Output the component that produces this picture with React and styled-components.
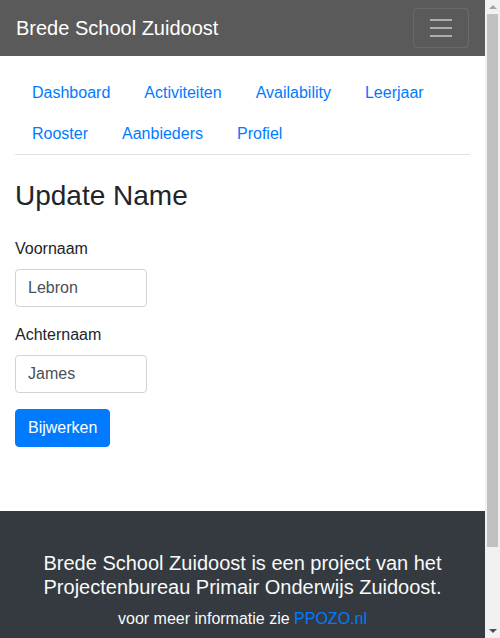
import React from 'react';
import styled, { createGlobalStyle } from 'styled-components';

const GlobalStyle = createGlobalStyle`
  * { box-sizing: border-box; }
  body {
    margin: 0 15px 0 0;
    font-family: "Liberation Sans", Arial, sans-serif;
    font-size: 16px;
    line-height: 1.5;
    color: #212529;
    background: #fff;
  }
`;

// fake browser scrollbar, as seen in the screenshot
const ScrollBar = styled.div`
  position: fixed;
  top: 0;
  right: 0;
  bottom: 0;
  width: 15px;
  display: flex;
  flex-direction: column;
  background: #f1f1f1;
`;

const ScrollButton = styled.div`
  display: flex;
  align-items: center;
  justify-content: center;
  height: 14px;

  &::after {
    content: '';
    border-left: 4px solid transparent;
    border-right: 4px solid transparent;
    ${({ down }) =>
      down
        ? 'border-top: 4px solid #505050;'
        : 'border-bottom: 4px solid #a3a3a3;'}
  }
`;

const ScrollTrack = styled.div`
  flex: 1;
  padding: 0 2px;
`;

const ScrollThumb = styled.div`
  height: 533px;
  background: #c1c1c1;
`;

const Navbar = styled.nav`
  display: flex;
  align-items: center;
  justify-content: space-between;
  height: 56px;
  padding: 8px 16px;
  background: #5a5a5a;
`;

const Brand = styled.a`
  font-size: 20px;
  line-height: 30px;
  color: #fff;
  text-decoration: none;
`;

const Toggler = styled.button`
  display: flex;
  align-items: center;
  justify-content: center;
  width: 56px;
  height: 40px;
  padding: 4px 12px;
  background: transparent;
  border: 1px solid rgba(255, 255, 255, 0.1);
  border-radius: 4px;
`;

const Container = styled.main`
  padding: 16px 15px 64px;
`;

const Tabs = styled.ul`
  display: flex;
  flex-wrap: wrap;
  margin: 0;
  padding: 0;
  list-style: none;
  border-bottom: 1px solid #dee2e6;
`;

const TabItem = styled.li`
  margin-bottom: -1px;
`;

const TabLink = styled.a`
  display: block;
  padding: 8px 16px;
  border: 1px solid transparent;
  color: #007bff;
  text-decoration: none;
`;

const Title = styled.h3`
  margin: 24px 0 8px;
  font-size: 28px;
  font-weight: 500;
  line-height: 1.2;
`;

const Form = styled.form`
  padding-top: 16px;
`;

const Group = styled.div`
  margin-bottom: 16px;
`;

const Label = styled.label`
  display: block;
  margin-bottom: 8px;
`;

const Input = styled.input`
  display: block;
  width: 132px;
  height: 38px;
  padding: 6px 12px;
  font-family: inherit;
  font-size: 16px;
  color: #495057;
  border: 1px solid #ced4da;
  border-radius: 4px;
  outline: none;
`;

const Button = styled.button`
  padding: 6px 12px;
  font-family: inherit;
  font-size: 16px;
  line-height: 1.5;
  color: #fff;
  background: #007bff;
  border: 1px solid #007bff;
  border-radius: 4px;
`;

const Footer = styled.footer`
  padding: 40px 15px;
  background: #343a40;
  color: #f8f9fa;
  text-align: center;
`;

const FooterTitle = styled.h5`
  margin: 0 0 8px;
  font-size: 20px;
  font-weight: 400;
  line-height: 1.2;
`;

const FooterText = styled.p`
  margin: 0 0 16px;

  a {
    color: #007bff;
    text-decoration: none;
  }
`;

const tabs = ['Dashboard', 'Activiteiten', 'Availability', 'Leerjaar', 'Rooster', 'Aanbieders', 'Profiel'];

export default function App() {
  return (
    <>
      <GlobalStyle />
      <Navbar>
        <Brand href="#">Brede School Zuidoost</Brand>
        <Toggler aria-label="Toggle navigation">
          <svg width="30" height="30" viewBox="0 0 30 30">
            <path
              d="M4 7h22M4 15h22M4 23h22"
              stroke="rgba(255,255,255,0.5)"
              strokeWidth="2"
            />
          </svg>
        </Toggler>
      </Navbar>
      <Container>
        <Tabs>
          {tabs.map((t) => (
            <TabItem key={t}>
              <TabLink href="#">{t}</TabLink>
            </TabItem>
          ))}
        </Tabs>
        <Title>Update Name</Title>
        <Form onSubmit={(e) => e.preventDefault()}>
          <Group>
            <Label>Voornaam</Label>
            <Input defaultValue="Lebron" />
          </Group>
          <Group>
            <Label>Achternaam</Label>
            <Input defaultValue="James" />
          </Group>
          <Button type="submit">Bijwerken</Button>
        </Form>
      </Container>
      <Footer>
        <FooterTitle>
          Brede School Zuidoost is een project van het Projectenbureau Primair Onderwijs Zuidoost.
        </FooterTitle>
        <FooterText>
          voor meer informatie zie <a href="#">PPOZO.nl</a>
        </FooterText>
      </Footer>
      <ScrollBar>
        <ScrollButton />
        <ScrollTrack>
          <ScrollThumb />
        </ScrollTrack>
        <ScrollButton down />
      </ScrollBar>
    </>
  );
}
